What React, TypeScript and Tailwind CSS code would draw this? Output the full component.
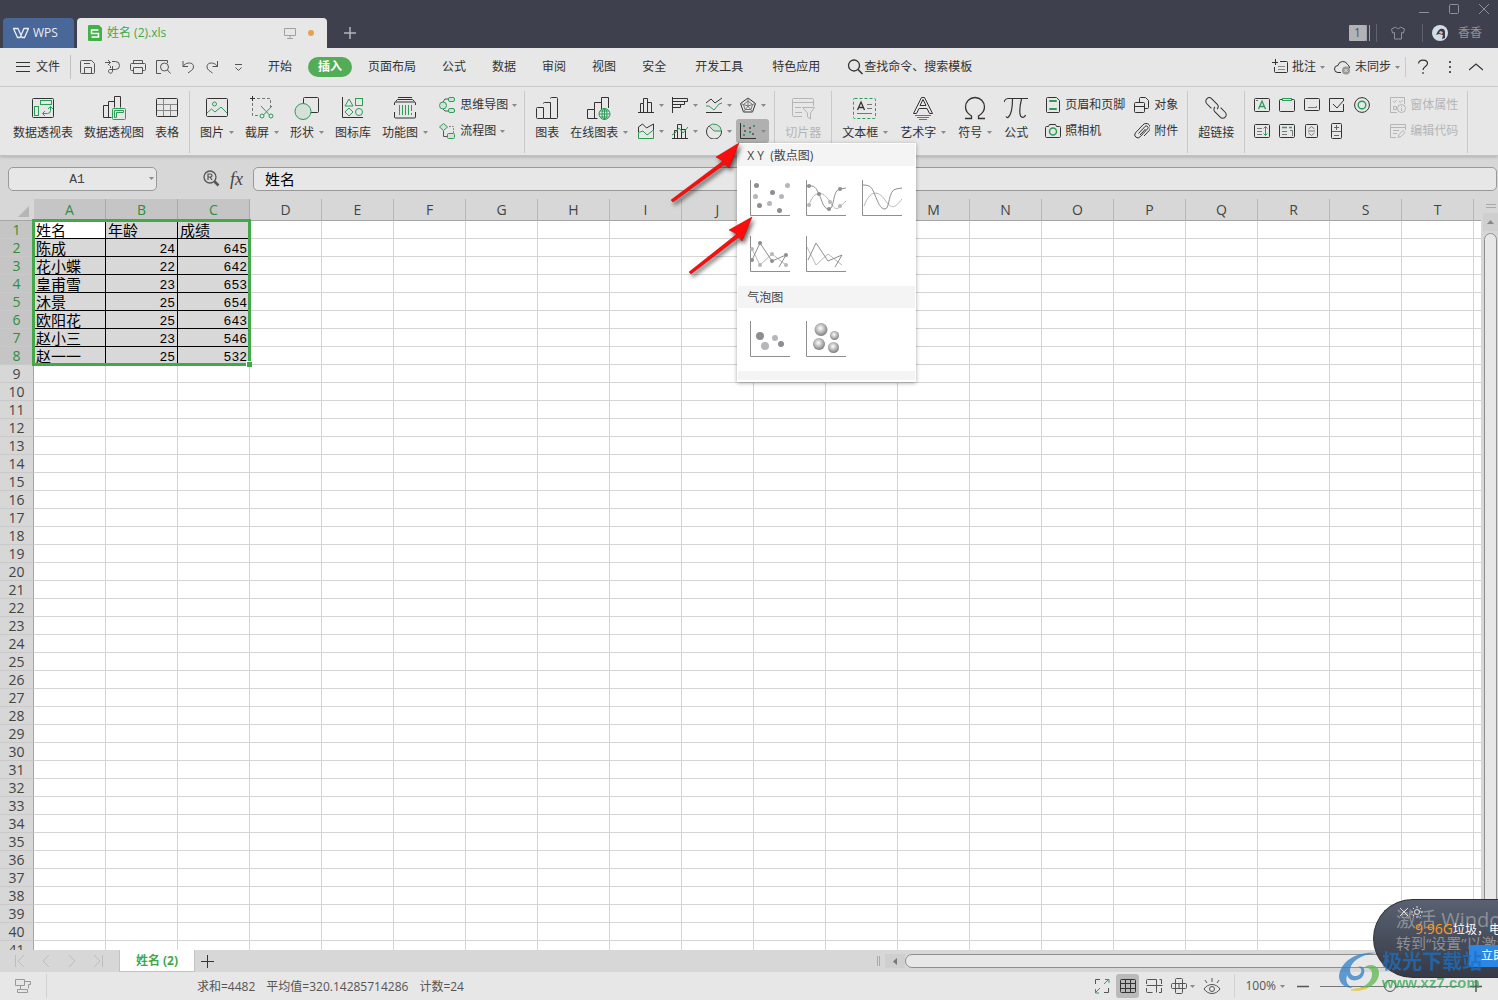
import React, { useState } from 'react'

const GREEN = '#2c9c57'

interface IconProps {
  w?: number
  h?: number
  className?: string
  children: React.ReactNode
}

function Icon({ w = 16, h = 16, className = '', children }: IconProps) {
  return (
    <svg width={w} height={h} viewBox={`0 0 ${w} ${h}`} fill="none" stroke="currentColor" className={`shrink-0 ${className}`} aria-hidden="true">
      {children}
    </svg>
  )
}

function Caret() {
  return (
    <Icon w={5} h={3} className="text-[#8a8a8a]">
      <path d="M0 0h5L2.5 3z" fill="currentColor" stroke="none" />
    </Icon>
  )
}

/* ---------- ribbon icons ---------- */

const pivotTable = (
  <Icon w={24} h={24}>
    <rect x="1.5" y="2.5" width="21" height="19" rx="1" />
    <g stroke={GREEN}>
      <rect x="9.5" y="4.5" width="11" height="4" />
      <rect x="3.5" y="10.5" width="4" height="9" />
      <path d="M19.5 10.5v4a3 3 0 0 1-3 3h-5M17 13l2.5-2.5L22 13M14 15l-2.5 2.5L14 20" />
    </g>
  </Icon>
)

const pivotChart = (
  <Icon w={24} h={24}>
    <path d="M9.5 21.5h-8v-12h5M6.5 21V5.500h6v6M12.500 6V.5h6v11" />
    <g stroke={GREEN}>
      <rect x="10.5" y="12.5" width="13" height="11" rx="1" />
      <path d="M12.5 21.5v-7h9v2h-7v5z" />
    </g>
  </Icon>
)

const tableIcon = (
  <Icon w={24} h={24}>
    <path d="M2 8.5h20M2 14.5h20M8.5 3v18M15.5 8v13" stroke="#888" />
    <rect x="1.5" y="2.5" width="21" height="18" rx="1" />
  </Icon>
)

const pictureIcon = (
  <Icon w={24} h={24}>
    <rect x="1.5" y="2.5" width="21" height="18" rx="1" />
    <g stroke={GREEN}>
      <circle cx="9.5" cy="8" r="2" />
      <path d="M2 17l4.5-4 3.5 3 6-5 6 6" />
    </g>
  </Icon>
)

const screenshotIcon = (
  <Icon w={24} h={24}>
    <path d="M2.5 0v5M0 2.5h5" />
    <path d="M7 2.5h13.5V12M2.5 7v12.5H9" stroke="#777" strokeDasharray="3 2" />
    <g stroke={GREEN}>
      <circle cx="12" cy="20" r="2" />
      <circle cx="21" cy="20" r="2" />
      <path d="M11 10l8.500 9M22 10l-8.500 9" />
    </g>
  </Icon>
)

const shapesIcon = (
  <Icon w={26} h={24}>
    <rect x="9.5" y="1.5" width="15" height="15" rx="1" />
    <circle cx="9" cy="15.5" r="8" fill="#d5e0d8" stroke={GREEN} />
  </Icon>
)

const iconLibrary = (
  <Icon w={24} h={24}>
    <path d="M1.5 1v20.5H22" />
    <g stroke={GREEN}>
      <path d="M8 3l4 7H4z" />
      <rect x="14.5" y="2.5" width="7" height="7" />
      <path d="M8 12l4 4-4 4-4-4z" />
      <circle cx="18" cy="16" r="3.5" />
    </g>
  </Icon>
)

const functionChart = (
  <Icon w={24} h={24}>
    <path d="M5 1.500h14M2.500 5.500l2-2h15l2 2M1.500 9V7a1 1 0 0 1 1-1h19a1 1 0 0 1 1 1v2M1.500 16v5a1 1 0 0 0 1 1h19a1 1 0 0 0 1-1v-5" />
    <path d="M6.5 9v10M9.5 9v10M12.5 9v10M15.5 9v10M18.5 9v6M18.5 17v2" stroke={GREEN} />
  </Icon>
)

const mindMap = (
  <Icon w={17}>
    <path d="M4 5l2-3h4M4 12l2 2h4" stroke="#555" />
    <g stroke={GREEN} fill="#d5e0d8">
      <circle cx="4" cy="8.5" r="3.5" />
      <rect x="9.5" y=".5" width="6" height="4" rx="1.5" />
      <rect x="9.5" y="11.5" width="6" height="4" rx="1.5" />
    </g>
  </Icon>
)

const flowChart = (
  <Icon w={17}>
    <path d="M10 3.5h4.5V10" stroke="#888" strokeDasharray="2 1" />
    <path d="M4.5 8v5.5H8" stroke="#555" />
    <g stroke={GREEN} fill="#d5e0d8">
      <path d="M4.5.5l4 3.500-4 3.500-4-3.500z" />
      <rect x="8.5" y="10.5" width="7" height="5" rx="1" />
    </g>
  </Icon>
)

const chartIcon = (
  <Icon w={24} h={24}>
    <path d="M1.5 12.5a1 1 0 0 1 1-1h6v11h-6a1 1 0 0 1-1-1zM8.5 7.5a1 1 0 0 1 1-1h6v16h-7M15.5 2.5a1 1 0 0 1 1-1h5a1 1 0 0 1 1 1v19a1 1 0 0 1-1 1h-6" />
  </Icon>
)

const onlineChart = (
  <Icon w={26} h={24}>
    <path d="M11.5 22.5h-10v-9h7v9M8.500 13.500v-7h7v7M15.500 7V1.500h7V12" />
    <g stroke={GREEN}>
      <circle cx="18.5" cy="18" r="5.5" fill="#e7e7e7" />
      <ellipse cx="18.5" cy="18" rx="2.5" ry="5.5" />
      <path d="M13 18h11M14 15h9M14 21h9M18.5 12.5v11" />
    </g>
  </Icon>
)

const slicer = (
  <Icon w={24} h={24}>
    <path d="M11 20.5H2.5a1 1 0 0 1-1-1v-16a1 1 0 0 1 1-1h19a1 1 0 0 1 1 1V10M2 6.5h20M4 11.5h6M4 16.5h7" />
    <path d="M11.5 11.5h12L19.5 17v6l-3-2v-4z" />
  </Icon>
)

const textBox = (
  <Icon w={24} h={24}>
    <rect x=".5" y="2.5" width="22" height="20" rx="1" stroke={GREEN} strokeDasharray="3 2" />
    <path d="M4.5 14L8 6l3.5 8M6 11.5h4" strokeWidth="1.3" />
    <path d="M14 8.5h5M14 12.5h5M4 17.5h15" stroke="#777" />
  </Icon>
)

const wordArt = (
  <Icon w={24} h={24}>
    <path d="M2.5 17.5L10.5 1.5h3l8 16h-3l-2.5-5H8l-2.5 5zM9 9.5h6l-3-6z" />
    <path d="M4 19.5h16M6 21.5h12M8 23.5h8" stroke={GREEN} />
  </Icon>
)

const omega = (
  <Icon w={24} h={24}>
    <path d="M2 22.5h6.5V20C4.5 17.5 2.5 15 2.5 11a9.5 9.5 0 0 1 19 0c0 4-2 6.5-6 9v2.5H22" strokeWidth="1.3" />
  </Icon>
)

const piIcon = (
  <Icon w={24} h={24}>
    <path d="M0 6c1-3 2-3.500 4-3.500h20M8.500 3c0 9-1 15-4 18-1 1-2 .5-2.500-.5M17.500 3c-1.500 6-2 11-1.500 15 .5 4 4.500 4.500 5.500 1" strokeWidth="1.2" />
  </Icon>
)

const headerFooter = (
  <Icon>
    <path d="M2.5.5h9l3 3v11a1 1 0 0 1-1 1h-11a1 1 0 0 1-1-1v-13a1 1 0 0 1 1-1z" />
    <path d="M4.5 3.5h7v1h-7zM4.5 11.5h7v1h-7z" stroke={GREEN} />
  </Icon>
)

const objectIcon = (
  <Icon>
    <path d="M5.5 5V1.5a1 1 0 0 1 1-1h5l3 3v7a1 1 0 0 1-1 1H11" />
    <rect x=".5" y="5.5" width="10" height="10" rx="1" />
    <path d="M1 9.5h9" />
  </Icon>
)

const cameraIcon = (
  <Icon>
    <path d="M1.5 3.5h2l1-2h6l1 2h3a1 1 0 0 1 1 1v9a1 1 0 0 1-1 1h-13a1 1 0 0 1-1-1v-9a1 1 0 0 1 1-1z" />
    <circle cx="8" cy="8.5" r="3.5" stroke={GREEN} strokeWidth="1.5" />
  </Icon>
)

const clipIcon = (
  <Icon>
    <path d="M4.5 10.5l6.5-7a1.700 1.700 0 0 1 2.600 2.300l-7.500 8a3 3 0 0 1-4.600-4l7.500-8a4.200 4.200 0 0 1 6.200 5.700L10 13M6 12l5.500-6" />
  </Icon>
)

const linkIcon = (
  <Icon w={24} h={24}>
    <g transform="rotate(45 12 12)">
      <path d="M9 15.500H2.500a3.500 3.500 0 0 1-3.500-3.500 3.500 3.500 0 0 1 3.500-3.500H10a3.500 3.500 0 0 1 3.500 3.500" />
      <path d="M15 8.500h6.500A3.500 3.500 0 0 1 25 12a3.500 3.500 0 0 1-3.500 3.500H14a3.500 3.500 0 0 1-3.500-3.500" />
    </g>
  </Icon>
)

const formIcons = [
  { name: '标签', icon: <Icon><rect x=".5" y="1.5" width="15" height="13" rx="1" /><path d="M2 3.5h2" stroke="#777" /><path d="M4.5 12L8 4l3.5 8M6 9.5h4" stroke={GREEN} strokeWidth="1.3" /></Icon> },
  { name: '分组框', icon: <Icon><rect x=".5" y="2.5" width="15" height="12" rx="1" /><rect x="3.5" y="1.5" width="9" height="2" fill="#e7e7e7" stroke={GREEN} /></Icon> },
  { name: '按钮', icon: <Icon><rect x=".5" y="1.5" width="15" height="12" rx="1" /><path d="M4 10.5h8.500V9" stroke="#777" /></Icon> },
  { name: '复选框', icon: <Icon><path d="M14.5 7v7.5H.5v-13h14V3M4 7l4 4 7-8" /></Icon> },
  { name: '选项按钮', icon: <Icon><circle cx="8" cy="8" r="7.4" /><circle cx="8" cy="8" r="3.8" stroke={GREEN} strokeWidth="1.4" /></Icon> },
  { name: '列表框', icon: <Icon><rect x=".5" y="1.5" width="15" height="13" rx="1" /><path d="M3 5.5h5M3 8.5h5M3 11.5h5" stroke="#777" /><path d="M11.5 3.5v9M9.5 5.5l2-2 2 2M9.5 10.5l2 2 2-2" stroke={GREEN} /></Icon> },
  { name: '组合框', icon: <Icon><rect x=".5" y="1.5" width="15" height="13" rx="1" /><path d="M3 4.5h5M10 4.5h3" stroke={GREEN} strokeWidth="1.4" /><path d="M3 8.5h5M3 11.5h5M11 7.5h2.500V13" stroke="#777" /></Icon> },
  { name: '滚动条', icon: <Icon><rect x="1.500" y="1.500" width="12" height="13" rx="1" /><path d="M4.500 6l3-2.500 3 2.500M4.500 10l3 2.500 3-2.500M4 8h7" stroke="#777" /></Icon> },
  { name: '微调项', icon: <Icon><rect x="2.5" y=".5" width="10" height="15" rx="1" /><path d="M3 8.500h9M7.500 2v5M5 4.500h5M5 12.500h5" stroke="#666" /></Icon> },
]

const formProps = (
  <Icon>
    <path d="M7 15.5H.5v-15h14V7M3 4l1.5 1.5L6.5 3M9 4l1.5 1.5L12.5 3M3.5 9.5h3v3h-3z" />
    <circle cx="11.5" cy="11.5" r="4" />
    <path d="M11.5 11v3M11.5 9v1" />
  </Icon>
)

const editCode = (
  <Icon>
    <path d="M6 14.5H.5v-13h15V7M1 4.5h14M3 7.5h6M3 10.5h4M8 14.5l1-3 4-4 2 2-4 4z" />
  </Icon>
)

const chartTypes = [
  { name: '柱形图', icon: <Icon><path d="M0 15.5h16M2.5 15V6.5h3V15M5.5 6.5v-5h4V15M9.5 5.5h4V15" /></Icon> },
  { name: '条形图', icon: <Icon><path d="M.5 0v16M.5 1.5h15v3H.5M.5 4.5h12v3H.5M.5 7.500h8v3H.5" /></Icon> },
  { name: '折线图', icon: <Icon><path d="M0 6l5-4 4 4 7-5M0 15.5h16" /><path d="M0 9h3l5 4 5-6 3-1" stroke={GREEN} /></Icon> },
  { name: '雷达图', icon: <Icon><path d="M8 1l7.5 5.5-3 8.5h-9l-3-8.500z" /><path d="M8 4l4.5 3.5-1.500 5H5L3.500 7.500zM8 1v8M.5 6.500L8 9l7.500-2.500M3.500 15L8 9l4.500 6" stroke="#777" /></Icon> },
  { name: '面积图', icon: <Icon><path d="M.5 9V4l4-3 4 4 7-4v7" /><path d="M.5 15.5v-6L5 8l4 4 6.500-5v8.500z" stroke={GREEN} /></Icon> },
  { name: '组合图', icon: <Icon><path d="M0 15.5h16M2.5 15V7.5h3V15M5.5 7.5v-6h4V15M9.5 6.500h4V15" /><path d="M0 12l3-2 4-5 4 5 5-6" stroke={GREEN} /></Icon> },
  { name: '饼图', icon: <Icon><path d="M3 3a7.500 7.500 0 1 0 12.500 5" /><path d="M3 3l5 5h7.500A7.500 7.500 0 0 0 3 3z" stroke={GREEN} fill="#d5e0d8" /></Icon> },
  { name: '散点图', icon: <Icon><path d="M.5 0v15.5H16" /><g stroke="none" fill={GREEN}><path d="M3 2h2v2H3zM13 2h2v2h-2zM9 8h2v2H9zM3 11h2v2H3z" /></g><g stroke="none" fill="#666"><path d="M9 4h2v2H9zM4 7h2v2H4zM12 10h2v2h-2z" /></g></Icon> },
]

/* ---------- ribbon parts ---------- */

function BigButton({ icon, label, caret, disabled }: { icon: React.ReactNode; label: string; caret?: boolean; disabled?: boolean }) {
  return (
    <button className={`flex flex-col items-center gap-[5px] shrink-0 ${disabled ? 'text-[#b5b5b5]' : 'text-[#333]'}`} disabled={disabled}>
      <span className="h-6 flex items-center justify-center">{icon}</span>
      <span className="flex items-center gap-[5px] leading-4 whitespace-nowrap">
        {label}
        {caret && <Caret />}
      </span>
    </button>
  )
}

function SmallButton({ icon, label, caret, disabled }: { icon: React.ReactNode; label: string; caret?: boolean; disabled?: boolean }) {
  return (
    <button className={`h-[26px] flex items-center gap-1 whitespace-nowrap ${disabled ? 'text-[#b5b5b5]' : 'text-[#333]'}`} disabled={disabled}>
      {icon}
      <span className="leading-4">{label}</span>
      {caret && <Caret />}
    </button>
  )
}

function Group({ className = '', children }: { className?: string; children: React.ReactNode }) {
  return <div className={`flex items-center shrink-0 h-[62px] pb-2 border-r border-[#c9c9c9] ${className}`}>{children}</div>
}

const DARK = '#8e8e92'
const LIGHT = '#b6b6bb'

function Dots({ points, color, r = 2.5 }: { points: number[][]; color: string; r?: number }) {
  return (
    <g fill={color} stroke="none">
      {points.map(([x, y, size]) => (
        <circle key={`${x}-${y}`} cx={x} cy={y} r={size ?? r} />
      ))}
    </g>
  )
}

function Thumb({ name, children }: { name: string; children: React.ReactNode }) {
  return (
    <button aria-label={name} className="w-10 h-9">
      <Icon w={40} h={36}>
        <path d="M.5 0v35.5H40" stroke="#8f8f8f" />
        {children}
      </Icon>
    </button>
  )
}

function ScatterMenu() {
  return (
    <div className="absolute left-px top-6 z-20 w-[179px] bg-white border border-white shadow-[0_1px_4px_rgba(0,0,0,0.35)] text-[#444]">
      <h3 className="h-[22px] pl-[9px] bg-[#f4f4f4] leading-6">X Y&nbsp; (散点图)</h3>
      <div className="grid grid-cols-[40px_40px_40px] gap-x-4 gap-y-5 pl-3 pt-[14px] pb-[14px]">
        <Thumb name="散点图">
          <Dots color={DARK} points={[[6.5, 5.5], [22.5, 12.5], [9.5, 25.5], [29.5, 30.5]]} />
          <Dots color={LIGHT} points={[[37.5, 5.5], [5.5, 16.5], [31.5, 16.5], [19.5, 23.5]]} />
        </Thumb>
        <Thumb name="带平滑线和数据标记的散点图">
          <path d="M3 25C8 10 17 10 24 22s9 5 16-1" stroke={LIGHT} />
          <path d="M1 6c8-1 9 2 12 8s4 15 10 15 3-19 11-20l6-1" stroke={DARK} />
          <Dots color={LIGHT} r={2} points={[[3, 25], [24, 22], [34, 26]]} />
          <Dots color={DARK} r={2} points={[[3, 6], [13, 14], [23, 29], [34, 9]]} />
        </Thumb>
        <Thumb name="带平滑线的散点图">
          <path d="M2 26C8 10 16 10 23 20s10 8 17-1" stroke={LIGHT} />
          <path d="M1 5c8 0 9 3 12 10s5 14 10 14 3-19 11-20l6-1" stroke={DARK} />
        </Thumb>
        <Thumb name="带直线和数据标记的散点图">
          <path d="M2 13l8 16 12-11 14 11" stroke={LIGHT} />
          <path d="M2 24L10 7l12 18 14-6-7 12" stroke={DARK} />
          <Dots color={LIGHT} r={2} points={[[2, 13], [10, 29], [22, 18], [36, 29]]} />
          <Dots color={DARK} r={2} points={[[2, 24], [10, 7], [22, 25], [36, 19]]} />
        </Thumb>
        <Thumb name="带直线的散点图">
          <path d="M1 11l9 18 12-11 14 11" stroke={LIGHT} />
          <path d="M2 24L10 7l12 18 14-6-7 12" stroke={DARK} />
        </Thumb>
      </div>
      <h3 className="h-[22px] pl-[9px] bg-[#f4f4f4] leading-6">气泡图</h3>
      <div className="grid grid-cols-[40px_40px_40px] gap-x-4 pl-3 pt-[13px] pb-[14px]">
        <Thumb name="气泡图">
          <Dots color={DARK} points={[[10, 15, 4], [31, 23, 3]]} />
          <Dots color={LIGHT} points={[[15, 25, 4], [25, 17, 3]]} />
        </Thumb>
        <Thumb name="三维气泡图">
          <defs>
            <radialGradient id="ball" cx="0.45" cy="0.4" r="0.6">
              <stop offset="0" stopColor="#fff" />
              <stop offset="0.4" stopColor="#ccc" />
              <stop offset="1" stopColor="#7c7c7c" />
            </radialGradient>
          </defs>
          <Dots color="url(#ball)" points={[[15, 8.5, 6.5], [28.5, 14.5, 4.5], [13, 23, 6], [27.5, 26.5, 5.5]]} />
        </Thumb>
      </div>
      <div className="h-[9px] mb-px bg-[#f4f4f4]" />
    </div>
  )
}

function Ribbon() {
  const [open, setOpen] = useState(true)

  return (
    <div className="relative z-10 flex h-[69px] pt-1 bg-[#e7e7e7] border-b border-[#c2c2c2] shadow-[0_1px_3px_rgba(0,0,0,0.2)]">
      <Group className="pl-[13px] pr-[10px] gap-[11px]">
        <BigButton icon={pivotTable} label="数据透视表" />
        <BigButton icon={pivotChart} label="数据透视图" />
        <BigButton icon={tableIcon} label="表格" />
      </Group>
      <Group className="pl-[10px] pr-[7px] gap-[11px]">
        <BigButton icon={pictureIcon} label="图片" caret />
        <BigButton icon={screenshotIcon} label="截屏" caret />
        <BigButton icon={shapesIcon} label="形状" caret />
        <BigButton icon={iconLibrary} label="图标库" />
        <BigButton icon={functionChart} label="功能图" caret />
        <div className="flex flex-col">
          <SmallButton icon={mindMap} label="思维导图" caret />
          <SmallButton icon={flowChart} label="流程图" caret />
        </div>
      </Group>
      <Group className="pl-[10px] pr-1 gap-[6px]">
        <div className="flex gap-[11px]">
          <BigButton icon={chartIcon} label="图表" />
          <BigButton icon={onlineChart} label="在线图表" caret />
        </div>
        <div className="relative grid grid-cols-4 gap-y-[2px]">
          {chartTypes.map((type) => {
            const isScatter = type.name === '散点图'
            return (
              <div key={type.name} className="relative w-[34px]">
                <button
                  aria-label={type.name}
                  onClick={() => isScatter && setOpen(!open)}
                  className={`w-[33px] h-6 flex items-center justify-center gap-[5px] rounded-[3px] text-[#333] ${isScatter && open ? 'bg-[#b0b0b0]' : ''}`}
                >
                  {type.icon}
                  <Caret />
                </button>
                {isScatter && open && <ScatterMenu />}
              </div>
            )
          })}
        </div>
      </Group>
      <Group className="px-[10px]">
        <BigButton icon={slicer} label="切片器" disabled />
      </Group>
      <Group className="pl-[10px] pr-[9px] gap-[17px]">
        <div className="flex gap-3">
          <BigButton icon={textBox} label="文本框" caret />
          <BigButton icon={wordArt} label="艺术字" caret />
          <BigButton icon={omega} label="符号" caret />
          <BigButton icon={piIcon} label="公式" />
        </div>
        <div className="grid grid-cols-[80px_44px] gap-x-[9px]">
          <SmallButton icon={headerFooter} label="页眉和页脚" />
          <SmallButton icon={objectIcon} label="对象" />
          <SmallButton icon={cameraIcon} label="照相机" />
          <SmallButton icon={clipIcon} label="附件" />
        </div>
      </Group>
      <Group className="px-[10px]">
        <BigButton icon={linkIcon} label="超链接" />
      </Group>
      <Group className="px-[9px] gap-5">
        <div className="grid grid-cols-5 gap-x-[9px]">
          {formIcons.map((item) => (
            <button key={item.name} aria-label={item.name} className="w-4 h-[26px] flex items-center text-[#333]">
              {item.icon}
            </button>
          ))}
        </div>
        <div className="flex flex-col">
          <SmallButton icon={formProps} label="窗体属性" disabled />
          <SmallButton icon={editCode} label="编辑代码" disabled />
        </div>
      </Group>
    </div>
  )
}

/* ---------- title bar and menu ---------- */

function TitleBar() {
  return (
    <header className="flex items-end h-12 bg-[#3e414d] pl-[3px]">
      <button className="flex items-center gap-1 w-[71px] h-[30px] pl-[10px] rounded-t-[4px] bg-[#4a6799] text-[#e8ecf3]">
        <Icon w={16} h={12}>
          <path d="M5 1.500L9 10.500h2.500l4-9H11l-4 9H4.500l-4-9z" strokeWidth="1.3" />
        </Icon>
        WPS
      </button>
      <div className="flex items-center w-[250px] h-[30px] ml-[3px] pl-[11px] pr-[13px] rounded-t-[4px] bg-[#e7e7e7] text-[#43a847]">
        <Icon w={14} h={16}>
          <path d="M1 0h10l3 3v12a1 1 0 0 1-1 1H1a1 1 0 0 1-1-1V1a1 1 0 0 1 1-1z" fill="#43b149" stroke="none" />
          <path d="M10.5 5h-7v3.5h7V12h-7" stroke="#fff" strokeWidth="1.5" />
        </Icon>
        <span className="ml-[5px] mr-auto">姓名 (2).xls</span>
        <Icon w={12} h={12} className="mr-3 text-[#a0a0a0]">
          <path d="M.5 1.5h11v7H.5zM6 9v2M3 11.5h6" />
        </Icon>
        <span className="w-[6px] h-[6px] rounded-full bg-[#e8a04f]" />
      </div>
      <button aria-label="新建标签" className="ml-[17px] mb-[9px] text-[#b4b5ba]">
        <Icon w={12} h={12}>
          <path d="M6 0v12M0 6h12" strokeWidth="1.5" />
        </Icon>
      </button>
      <div className="ml-auto flex flex-col items-end h-12 text-[#8f9199]">
        <div className="flex items-center gap-5 h-[18px] pr-[9px]">
          <button aria-label="最小化"><Icon w={10} h={10}><path d="M0 8.5h10" /></Icon></button>
          <button aria-label="最大化"><Icon w={10} h={10}><rect x=".5" y=".5" width="9" height="9" rx="1" /></Icon></button>
          <button aria-label="关闭"><Icon w={10} h={10}><path d="M0 0l10 10M10 0L0 10" /></Icon></button>
        </div>
        <div className="flex items-center h-[30px] pr-4">
          <span className="w-[17px] h-4 rounded-[1px] bg-[#b3b3b7] text-[#555] text-center leading-4">1</span>
          <span className="w-[4px] h-4 border-x border-[#a0a1a7] mr-[6px]" />
          <span className="w-px h-[18px] bg-[#60636d]" />
          <Icon w={14} h={14} className="ml-[14px] mr-[17px]">
            <path d="M4.5 1L.5 3l1 4 2-.5v6.500h7V6.500l2 .5 1-4-4-2c-1 2-4 2-5 0z" />
          </Icon>
          <span className="w-px h-[18px] bg-[#60636d]" />
          <Icon className="ml-[9px] mr-[10px]">
            <circle cx="8" cy="8" r="8" fill="#d3dde4" stroke="none" />
            <path d="M8 4c3-1 5 0 5 3v6l-3 1 1-4-4-1-3 1 2-4z" fill="#3c3a44" stroke="none" />
            <path d="M8 6l3 1-1 2-3-1z" fill="#e4b8ae" stroke="none" />
          </Icon>
          <span>香香</span>
        </div>
      </div>
    </header>
  )
}

const quickTools = [
  { name: '保存', icon: <Icon><path d="M2.5 1.5h9l3 3v9a1 1 0 0 1-1 1h-12a1 1 0 0 1-1-1v-11a1 1 0 0 1 1-1zM4.5 14V8.5h7V14M4 4.5h6" /></Icon> },
  { name: '输出为PDF', icon: <Icon><path d="M0 3.500h5M3 1l2.500 2.500L3 6M7 2.500h3.500a4 4 0 0 1 0 8H7.500M5.500 9v-1.500a2 2 0 0 0-1-1M7.500 7v5.500a2 2 0 1 1-3-2l3 0" /></Icon> },
  { name: '打印', icon: <Icon><path d="M3.5 4V1.5h9V4M3.5 11.5h-2a1 1 0 0 1-1-1v-5a1 1 0 0 1 1-1h13a1 1 0 0 1 1 1v5a1 1 0 0 1-1 1h-2M3.5 8.5h9v6h-9z" /></Icon> },
  { name: '打印预览', icon: <Icon><path d="M6 14.5H1.5v-13h11V4" /><circle cx="9.5" cy="8" r="4" /><path d="M12.5 11l3 3.5" /></Icon> },
  { name: '撤销', icon: <Icon><path d="M3 2v5.500h5M3 7.500C6 2.500 14 3 13.500 8c-.3 3-3 4-5.500 6" /></Icon> },
  { name: '恢复', icon: <Icon><path d="M12.5 2v5.500h-5M12.500 7.500C9.500 2.500 1.500 3 2 8c.3 3 3 4 5.500 6" /></Icon> },
  { name: '自定义', icon: <Icon><path d="M5 5.5h7M5.500 8.500l3 3 3-3" /></Icon> },
]

const menus = ['开始', '插入', '页面布局', '公式', '数据', '审阅', '视图', '安全']
const extraMenus = ['开发工具', '特色应用']

function MenuBar() {
  return (
    <nav className="flex items-center h-[39px] bg-[#e7e7e7] border-b border-[#d2d2d2] text-[#333] leading-[18px] whitespace-nowrap">
      <button className="flex items-center gap-[6px] pl-4 pr-[10px]">
        <Icon w={14} h={12}><path d="M0 1.500h14M0 5.500h14M0 10.500h14" /></Icon>
        文件
      </button>
      <span className="w-px h-6 bg-[#c2c2c2] mr-[9px]" />
      <div className="flex gap-[9px]">
        {quickTools.map((tool) => (
          <button key={tool.name} aria-label={tool.name} className="text-[#555]">{tool.icon}</button>
        ))}
      </div>
      <div className="flex items-center ml-[9px]">
        {menus.map((menu) =>
          menu === '插入' ? (
            <button key={menu} className="h-5 mx-[3px] px-[10px] rounded-full bg-[#52ad56] text-white font-bold">{menu}</button>
          ) : (
            <button key={menu} className="px-[13px]">{menu}</button>
          )
        )}
      </div>
      <div className="flex gap-[3px] ml-[3px]">
        {extraMenus.map((menu) => (
          <button key={menu} className="px-[13px]">{menu}</button>
        ))}
      </div>
      <label className="flex items-center ml-[14px]">
        <Icon w={17} h={16}>
          <circle cx="7" cy="6.5" r="5.5" strokeWidth="1.3" />
          <path d="M11 10.500l4.500 4.500" strokeWidth="1.5" />
        </Icon>
        <input aria-label="查找命令" placeholder="查找命令、搜索模板" className="w-[120px] bg-transparent outline-none placeholder:text-[#333]" />
      </label>
      <div className="ml-auto flex items-center">
        <button className="flex items-center gap-1">
          <Icon><path d="M3.5 0v6M0 3.5h6M8 2.5h6.5a1 1 0 0 1 1 1v9a1 1 0 0 1-1 1H3.500a1 1 0 0 1-1-1V8" /><path d="M6 7.500h7M6 10.500h7" stroke="#888" /></Icon>
          批注
          <Caret />
        </button>
        <button className="flex items-center gap-1 ml-[9px]">
          <Icon w={17}>
            <path d="M7 13.5H4a3.500 3.500 0 0 1 0-7 5 5 0 0 1 9.500-1A4 4 0 0 1 15.500 9" />
            <circle cx="12" cy="11.5" r="4" fill="#999" stroke="none" />
            <path d="M10.5 10l3 3M13.5 10l-3 3" stroke="#e7e7e7" />
          </Icon>
          未同步
          <Caret />
        </button>
        <span className="w-px h-5 ml-[5px] mr-[11px] bg-[#c9c9c9]" />
        <button aria-label="帮助"><Icon w={12}><path d="M1.5 4.5C2 0 10.5 0 10.5 4.500 10.500 7.500 6 7.500 6 11M6 13v2" strokeWidth="1.2" /></Icon></button>
        <button aria-label="更多" className="ml-[15px]"><Icon w={12}><path d="M6 2v2M6 7v2M6 12v2" strokeWidth="2" stroke="#555" /></Icon></button>
        <button aria-label="折叠功能区" className="ml-[13px] mr-[15px]"><Icon w={14}><path d="M0 11l7-6 7 6" strokeWidth="1.2" /></Icon></button>
      </div>
    </nav>
  )
}

function FormulaBar() {
  return (
    <div className="flex items-center h-[43px] pl-2 pr-px pt-[2px] bg-[#d7d7d7]">
      <label className="flex items-center w-[149px] h-6 pr-[2px] rounded-[5px] border border-[#999] bg-[#e7e7e7]">
        <input aria-label="名称框" defaultValue="A1" className="flex-1 min-w-0 pt-[2px] pr-1 bg-transparent text-center outline-none text-[#444] text-[13px] font-['Liberation_Mono',monospace]" />
        <Caret />
      </label>
      <button aria-label="查找函数" className="ml-[46px] text-[#555]">
        <Icon w={17} h={17}>
          <circle cx="7" cy="7" r="6" strokeWidth="1.3" />
          <path d="M5 10V4h2.5a1.500 1.500 0 0 1 0 3H5M7 7l2 3" strokeWidth="1.2" />
          <path d="M11.5 11.5l4 4" strokeWidth="2.5" />
        </Icon>
      </button>
      <button aria-label="插入函数" className="w-[33px] text-[#444] text-[18px] leading-5 italic font-['Liberation_Serif',serif]">fx</button>
      <input
        aria-label="编辑栏"
        defaultValue="姓名"
        className="flex-1 min-w-0 h-6 px-[11px] rounded-[5px] border border-[#999] bg-[#e7e7e7] outline-none text-[15px] text-black"
      />
    </div>
  )
}

/* ---------- sheet ---------- */

const columns = 'ABCDEFGHIJKLMNOPQRST'.split('')
const rowCount = 41

const sheet: (string | number)[][] = [
  ['姓名', '年龄', '成绩'],
  ['陈成', 24, 645],
  ['花小蝶', 22, 642],
  ['皇甫雪', 23, 653],
  ['沐景', 25, 654],
  ['欧阳花', 25, 643],
  ['赵小三', 23, 546],
  ['赵一一', 25, 532],
]

function Cell({ row, col }: { row: number; col: number }) {
  const value = sheet[row]?.[col]
  if (value === undefined) {
    return <td className="h-[18px] p-0 border-r border-b border-[#d4d4d4]" />
  }
  const isActive = row === 0 && col === 0
  return (
    <td className={`h-[18px] p-0 border-r border-b border-black text-black ${isActive ? 'bg-white' : 'bg-[#d8d8d8]'}`}>
      {typeof value === 'number' ? (
        <div className="h-[17px] pt-[2px] pr-[2px] text-right text-[13px] leading-[17px] font-['Liberation_Mono',monospace]">{value}</div>
      ) : (
        <div className="h-[17px] pl-[2px] text-[15px] leading-[18px]">{value}</div>
      )}
    </td>
  )
}

function Sheet() {
  return (
    <main className="flex flex-1 min-h-0 bg-[#d7d7d7]">
      <div className="relative flex-1 min-w-0 overflow-hidden bg-white">
        <table className="table-fixed border-separate border-spacing-0 w-[1546px]">
          <colgroup>
            <col className="w-[34px]" />
            {columns.map((c) => <col key={c} className="w-[72px]" />)}
            <col className="w-[72px]" />
          </colgroup>
          <thead>
            <tr className="h-[22px] text-[14px] leading-[18px] text-[#444]">
              <th className="p-0 bg-[#d7d7d7] border-b border-[#a6a6a6]">
                <Icon w={11} h={11} className="ml-[18px] mt-[4px]"><path d="M11 0v11H0z" fill="#b5b5b5" stroke="none" /></Icon>
              </th>
              {columns.map((c, i) => (
                <th
                  key={c}
                  className={`p-0 font-normal border-r border-b border-b-[#a6a6a6] ${i < 3 ? 'bg-[#c5c5c5] text-[#2f8f3d] border-r-[#aaa]' : 'bg-[#d7d7d7] border-r-[#b8b8b8]'}`}
                >
                  {c}
                </th>
              ))}
              <th className="p-0 bg-[#d7d7d7] border-b border-[#a6a6a6]" />
            </tr>
          </thead>
          <tbody>
            {Array.from({ length: rowCount }, (_, row) => (
              <tr key={row} className="h-[18px]">
                <th
                  className={`h-[18px] p-0 border-r border-b border-b-[#c9c9c9] border-r-[#a6a6a6] text-[14px] leading-[17px] font-normal ${row < sheet.length ? 'bg-[#c5c5c5] text-[#2f8f3d]' : 'bg-[#d7d7d7] text-[#444]'}`}
                >
                  <div className="h-[17px]">{row + 1}</div>
                </th>
                {columns.map((c, col) => <Cell key={c} row={row} col={col} />)}
                <td className="h-[18px] p-0 border-b border-[#d4d4d4]" />
              </tr>
            ))}
          </tbody>
        </table>
        {/* selection A1:C8 */}
        <div className="absolute left-8 top-5 w-[219px] h-[147px] border-[3px] border-[#43a847] pointer-events-none">
          <span className="absolute -right-1 -bottom-1 w-[6px] h-[6px] border-l border-t border-white bg-[#43a847]" />
        </div>
      </div>
      {/* vertical scroll bar */}
      <div className="flex flex-col items-center w-[17px] pl-[2px] pb-5">
        <span className="w-[10px] h-[4px] mt-[5px] mb-[5px] border-y border-[#aaa]" />
        <button aria-label="向上滚动" className="flex items-center justify-center w-[15px] h-[18px] bg-[#cfcfcf]">
          <Icon w={7} h={4}><path d="M3.5 0L7 4H0z" fill="#888" stroke="none" /></Icon>
        </button>
        <span className="flex-1 w-[13px] mt-[2px] rounded-full border border-[#8f8f8f] bg-[#e7e7e7]" />
      </div>
    </main>
  )
}

function SheetTabs() {
  return (
    <div className="flex items-center h-[22px] bg-[#d7d7d7]">
      <div className="flex gap-[14px] pl-[14px] w-[119px] text-[#bdbdbd]">
        <button aria-label="第一张"><Icon w={12} h={12}><path d="M1.5 0v12M10 0L4 6l6 6" /></Icon></button>
        <button aria-label="上一张"><Icon w={12} h={12}><path d="M9 0L3 6l6 6" /></Icon></button>
        <button aria-label="下一张"><Icon w={12} h={12}><path d="M3 0l6 6-6 6" /></Icon></button>
        <button aria-label="最后一张"><Icon w={12} h={12}><path d="M10.5 0v12M2 0l6 6-6 6" /></Icon></button>
      </div>
      <button className="w-[76px] h-[22px] pt-px bg-white border-x border-b border-[#c2c2c2] text-[#43a847] font-bold">姓名 (2)</button>
      <button aria-label="新建工作表" className="ml-[6px] text-[#333]">
        <Icon w={13} h={13}><path d="M6.5 0v13M0 6.5h13" /></Icon>
      </button>
      <div className="flex items-center ml-auto w-[621px] h-[22px] pr-6">
        <span className="w-[3px] h-[10px] mr-[5px] border-x border-[#aaa]" />
        <button aria-label="向左滚动" className="flex items-center justify-center w-5 h-[14px] bg-[#cfcfcf]">
          <Icon w={4} h={7}><path d="M4 0v7L0 3.5z" fill="#777" stroke="none" /></Icon>
        </button>
        <span className="flex-1 h-[14px] rounded-full border border-[#8f8f8f] bg-[#e7e7e7]" />
      </div>
    </div>
  )
}

function StatusBar() {
  const [zoom, setZoom] = useState(50)

  return (
    <footer className="flex items-center h-7 bg-[#e7e7e7] text-[#555]">
      <Icon className="ml-[15px] mr-[15px] text-[#999]">
        <path d="M.5 1.5h9v6h-9zM9.5 3.5h6v3h-2v4M5.5 8v4M2.5 11.5h10v3h-10z" />
      </Icon>
      <span className="w-px h-6 bg-[#d2d2d2]" />
      <p className="flex gap-[11px] pt-px ml-[150px]">
        <span>求和=4482</span>
        <span>平均值=320.14285714286</span>
        <span>计数=24</span>
      </p>
      <div className="ml-auto flex items-center">
        <button aria-label="全屏显示" className="mr-[6px]">
          <Icon>
            <path d="M1.5 6V1.5H6M14.5 10v4.5H10" />
            <path d="M10 6l5-5M11 1.5h4V5M6 10l-5 5M1.5 11v4H5" stroke={GREEN} />
          </Icon>
        </button>
        <button aria-label="普通视图" className="flex items-center justify-center w-[23px] h-6 rounded-[3px] bg-[#bababa] text-[#333]">
          <Icon><rect x=".5" y="1.5" width="15" height="13" rx="1" /><path d="M1 5.5h14M1 10.5h14M5.5 2v12M10.5 2v12" /></Icon>
        </button>
        <button aria-label="分页预览" className="ml-[7px]">
          <Icon w={17}><path d="M.5 6V2.500a1 1 0 0 1 1-1H10.500V14.500M.5 7.500H16.500M13.500 1.500h2V6M.5 10v3.500a1 1 0 0 0 1 1h5M13 14.500h2.500V10" /></Icon>
        </button>
        <button aria-label="阅读模式" className="flex items-center gap-[3px] ml-2">
          <Icon><rect x="4.5" y=".5" width="7" height="15" rx="1" /><path d="M4 5.5H1.500a1 1 0 0 0-1 1v3a1 1 0 0 0 1 1H14.500a1 1 0 0 0 1-1v-3a1 1 0 0 0-1-1zM8 5v6" /></Icon>
          <Caret />
        </button>
        <button aria-label="护眼模式" className="ml-2">
          <Icon w={18} h={17}><path d="M1 11c4-6 12-6 16 0-4 6-12 6-16 0zM9 4V0M4 5L2 2M14 5l2-3" /><circle cx="9" cy="11" r="2.5" /></Icon>
        </button>
        <span className="w-px h-6 ml-[13px] mr-[10px] bg-[#d2d2d2]" />
        <button className="flex items-center gap-1">100% <Caret /></button>
        <button aria-label="缩小" className="ml-3"><Icon w={12} h={12}><path d="M0 6.5h12" strokeWidth="1.5" /></Icon></button>
        <input
          type="range"
          aria-label="缩放比例"
          value={zoom}
          onChange={(e) => setZoom(Number(e.target.value))}
          className="w-[139px] h-3 mx-[11px] appearance-none bg-transparent [&::-webkit-slider-runnable-track]:h-px [&::-webkit-slider-runnable-track]:bg-[#777] [&::-webkit-slider-thumb]:appearance-none [&::-webkit-slider-thumb]:size-3 [&::-webkit-slider-thumb]:-mt-[6px] [&::-webkit-slider-thumb]:rounded-full [&::-webkit-slider-thumb]:border [&::-webkit-slider-thumb]:border-[#555] [&::-webkit-slider-thumb]:bg-[#e7e7e7]"
        />
        <button aria-label="放大" className="mr-4"><Icon w={12} h={12}><path d="M0 6.5h12M6 0v12" strokeWidth="1.5" /></Icon></button>
      </div>
    </footer>
  )
}

/* ---------- things floating over the window ---------- */

function RedArrows() {
  return (
    <svg width="90" height="142" className="absolute left-[668px] top-[138px] z-30 pointer-events-none drop-shadow-[2px_3px_2px_rgba(0,0,0,0.6)]" aria-hidden="true">
      <g fill="#fb0d0d" stroke="#c40000" strokeWidth="0.5">
        <path d="M71 5L48 19l7 4L3 62l2 2 52-38 4 4z" />
        <path d="M84 79L61 92l8 4-48 38 2 2 48-37 3 4z" />
      </g>
    </svg>
  )
}

function CleanerWidget() {
  return (
    <aside className="absolute right-0 bottom-[22px] z-30 w-[125px] h-[79px] overflow-hidden rounded-l-full border border-r-0 border-[#333] bg-gradient-to-b from-[#596172] to-[#363a46] whitespace-nowrap">
      <div className="absolute left-[22px] top-[5px] text-[#8d9097]">
        <p className="text-[20px] leading-[30px]">激活 Windows</p>
        <p className="text-[15px] leading-4">转到“设置”以激活</p>
      </div>
      <Icon w={26} h={13} className="absolute left-[25px] top-[6px] text-[#e0e0e0]">
        <path d="M1 2l8 8M9 2l-8 8" />
        <circle cx="18" cy="6" r="2.5" />
        <path d="M18 0v2M18 10v2M12 6h2M22 6h2M14 2l1 1M22 2l-1 1M14 10l1-1M22 10l-1-1" />
      </Icon>
      <p className="absolute left-[41px] top-5 text-white leading-[18px]">
        <span className="text-[14px] text-[#ff9a1a]">9.96G</span>垃圾，电脑
      </p>
      <button className="absolute left-[95px] top-[45px] h-[22px] w-[60px] pl-3 rounded-[2px] bg-[#2b87e3] text-left text-white">立即</button>
    </aside>
  )
}

function Watermark() {
  return (
    <div className="absolute right-[10px] bottom-2 z-40 flex items-center pointer-events-none opacity-75">
      <Icon w={44} h={42}>
        <path d="M1 26C3 10 20 1 39 3 24 4 13 11 12 20c0 6 6 8 10 4 3-3 1-7-2-7 6-2 8 4 5 9-4 6-14 6-16-1-2 7 1 11 6 13C7 38 1 34 1 26z" fill="#2f80c8" stroke="none" />
        <path d="M14 39c10 0 20-6 20-15 0-5-4-7-8-6 4-5 15-4 15 5 0 11-13 19-27 16z" fill="#5db84e" stroke="none" />
        <path d="M13 40c6 1 12 0 16-2-5 0-11 1-16 2z" fill="#e6c431" stroke="#e6c431" />
      </Icon>
      <div className="w-[106px] font-bold whitespace-nowrap">
        <p className="text-[20px] leading-6 text-[#1f6fc0]">极光下载站</p>
        <p className="text-[15px] leading-[18px] text-[#35a855] font-['Liberation_Sans',sans-serif]">www.xz7.com</p>
      </div>
    </div>
  )
}

export default function App() {
  return (
    <div className="relative flex flex-col h-screen overflow-hidden text-[12px] leading-4 font-['Open_Sans','Noto_Sans_CJK_SC',sans-serif]">
      <TitleBar />
      <MenuBar />
      <Ribbon />
      <FormulaBar />
      <Sheet />
      <SheetTabs />
      <StatusBar />
      <RedArrows />
      <CleanerWidget />
      <Watermark />
    </div>
  )
}
